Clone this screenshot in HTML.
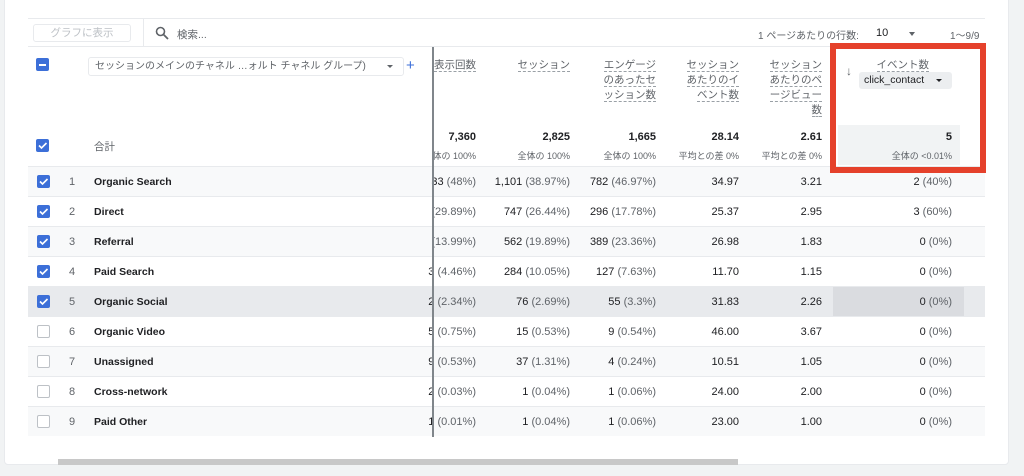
<!DOCTYPE html>
<html><head><meta charset="utf-8"><style>
*{box-sizing:border-box;margin:0;padding:0}
body{width:1024px;height:476px;background:#f1f3f4;font-family:"Liberation Sans","Noto Sans CJK JP",sans-serif;color:#202124;position:relative;overflow:hidden;font-size:11px}
.card{position:absolute;left:4px;top:-4px;width:1005px;height:469px;background:#fff;border-radius:4px;border:1px solid #e8eaed}
.a{position:absolute}
.cb{position:absolute;width:13px;height:13px;border-radius:2px;background:#3c6fd8}
.cb svg{position:absolute;left:1px;top:1px}
.ucb{position:absolute;width:13px;height:13px;border:1.5px solid #bdc1c6;border-radius:2px;background:#fff}
.row{position:absolute;left:28px;width:957px;height:30px;border-top:1px solid #e8eaed}
.r{position:absolute;text-align:right;white-space:nowrap}
.g{color:#5f6368}
.h{color:#5f6368;font-size:10.5px;line-height:15px;text-align:right;position:absolute}
.h span{border-bottom:1px dashed #9aa0a6}
</style></head><body>
<div class="card"></div>
<div class="a" style="left:28px;top:18px;width:957px;height:1px;background:#e8eaed"></div>
<div class="a" style="left:33px;top:24px;width:98px;height:18px;border:1px solid #e8eaed;border-radius:3px;color:#bdc1c6;font-size:10.5px;text-align:center;line-height:16px">グラフに表示</div>
<div class="a" style="left:143px;top:19px;width:1px;height:28px;background:#e8eaed"></div>
<svg class="a" style="left:155px;top:26px" width="14" height="14" viewBox="0 0 14 14"><circle cx="5.5" cy="5.5" r="4" fill="none" stroke="#5f6368" stroke-width="1.6"/><path d="M8.5 8.5L13 13" stroke="#5f6368" stroke-width="1.8"/></svg>
<div class="a" style="left:177px;top:27px;font-size:10.5px;color:#5f6368">検索...</div>
<div class="a" style="left:758px;top:27px;font-size:10px;color:#5f6368">1 ページあたりの行数:</div>
<div class="a" style="left:876px;top:27px;font-size:11px">10</div>
<div class="a" style="left:909px;top:32px;border:3.5px solid transparent;border-top:4px solid #5f6368"></div>
<div class="a" style="left:950px;top:27px;font-size:10px;color:#5f6368">1〜9/9</div>
<div class="a" style="left:28px;top:46px;width:957px;height:1px;background:#e8eaed"></div>
<!-- header -->
<div class="cb" style="left:36px;top:58px"><div class="a" style="left:3px;top:5.5px;width:7px;height:2px;background:#fff"></div></div>
<div class="a" style="left:88px;top:57px;width:316px;height:19px;border:1px solid #e8eaed;border-radius:3px;font-size:10px;color:#5f6368;line-height:17px;padding-left:6px">セッションのメインのチャネル …ォルト チャネル グループ)</div>
<div class="a" style="left:387px;top:65px;border:3px solid transparent;border-top:3.5px solid #5f6368"></div>
<div class="a" style="left:406px;top:57px;color:#3c6fd8;font-size:15px;line-height:17px">+</div>
<div class="h" style="right:548px;top:58px"><span>表示回数</span></div>
<div class="h" style="right:454px;top:58px"><span>セッション</span></div>
<div class="h" style="right:368px;top:58px"><span>エンゲージ</span><br><span>のあったセ</span><br><span>ッション数</span></div>
<div class="h" style="right:285px;top:58px"><span>セッション</span><br><span>あたりのイ</span><br><span>ベント数</span></div>
<div class="h" style="right:202px;top:58px"><span>セッション</span><br><span>あたりのペ</span><br><span>ージビュー</span><br><span>数</span></div>
<div class="a" style="left:838px;top:125px;width:122px;height:40px;background:#f1f3f4"></div>
<div class="a" style="left:846px;top:64px;color:#5f6368;font-size:12px">↓</div>
<div class="h" style="right:95px;top:58px"><span>イベント数</span></div>
<div class="a" style="left:859px;top:72px;width:93px;height:17px;background:#eceef0;border-radius:3px;font-size:10.5px;line-height:17px;padding-left:5px">click_contact</div>
<div class="a" style="left:936px;top:79px;border:3px solid transparent;border-top:3.5px solid #202124"></div>
<!-- total -->
<div class="cb" style="left:36px;top:139px"><svg width="11" height="11" viewBox="0 0 11 11"><path d="M2 5.5l2.5 2.5L9.5 3" fill="none" stroke="#fff" stroke-width="1.6"/></svg></div>
<div class="a g" style="left:94px;top:139px;font-size:10.5px">合計</div>
<div id="tot"></div>
<div id="rows"></div>
<div class="a" style="left:432px;top:47px;width:1.5px;height:390px;background:#80868b"></div>
<div class="a" style="left:830px;top:43px;width:156px;height:130px;border:6px solid #e5412b"></div>
<div class="a" style="left:58px;top:459px;width:680px;height:6px;background:#c8c8c8"></div>
<script>
var cols=[476,570,656,739,822,952];
var tot=[["7,360","体の 100%"],["2,825","全体の 100%"],["1,665","全体の 100%"],["28.14","平均との差 0%"],["2.61","平均との差 0%"],["5","全体の <0.01%"]];
var h="";
tot.forEach(function(t,i){h+='<div class="r" style="right:'+(1024-cols[i])+'px;top:131px;font-weight:bold;font-size:11px">'+t[0]+'</div><div class="r g" style="right:'+(1024-cols[i])+'px;top:149px;font-size:9px">'+t[1]+'</div>';});
document.getElementById("tot").innerHTML=h;
var d=[["Organic Search","33 (48%)","1,101 (38.97%)","782 (46.97%)","34.97","3.21","2 (40%)"],
["Direct","(29.89%)","747 (26.44%)","296 (17.78%)","25.37","2.95","3 (60%)"],
["Referral","(13.99%)","562 (19.89%)","389 (23.36%)","26.98","1.83","0 (0%)"],
["Paid Search","3 (4.46%)","284 (10.05%)","127 (7.63%)","11.70","1.15","0 (0%)"],
["Organic Social","2 (2.34%)","76 (2.69%)","55 (3.3%)","31.83","2.26","0 (0%)"],
["Organic Video","5 (0.75%)","15 (0.53%)","9 (0.54%)","46.00","3.67","0 (0%)"],
["Unassigned","9 (0.53%)","37 (1.31%)","4 (0.24%)","10.51","1.05","0 (0%)"],
["Cross-network","2 (0.03%)","1 (0.04%)","1 (0.06%)","24.00","2.00","0 (0%)"],
["Paid Other","1 (0.01%)","1 (0.04%)","1 (0.06%)","23.00","1.00","0 (0%)"]];
h="";
d.forEach(function(r,i){var y=166+i*30;var bg=i==4?"#e8eaed":(i%2==0?"#f8f9fa":"#fff");
h+='<div class="row" style="top:'+y+'px;background:'+bg+'"></div>';
if(i==4)h+='<div class="a" style="left:833px;top:'+(y+1)+'px;width:131px;height:29px;background:#dadce0"></div>';
h+=i<5?'<div class="cb" style="left:37px;top:'+(y+9)+'px"><svg width="11" height="11" viewBox="0 0 11 11"><path d="M2 5.5l2.5 2.5L9.5 3" fill="none" stroke="#fff" stroke-width="1.6"/></svg></div>':'<div class="ucb" style="left:37px;top:'+(y+9)+'px"></div>';
h+='<div class="a g" style="left:69px;top:'+(y+10)+'px">'+(i+1)+'</div><div class="a" style="left:94px;top:'+(y+10)+'px;font-weight:bold;font-size:10.5px">'+r[0]+'</div>';
for(var c=0;c<6;c++){var v=r[c+1],sp=v.indexOf(' ');var s=sp>0?(v.slice(0,sp)+' <span class="g">'+v.slice(sp+1)+'</span>'):'<span class="g">'+v+'</span>';
if(c>=3&&c<=4)s=v;
h+='<div class="r" style="right:'+(1024-cols[c])+'px;top:'+(y+10)+'px">'+s+'</div>';}
});
document.getElementById("rows").innerHTML=h;
</script>
</body></html>
